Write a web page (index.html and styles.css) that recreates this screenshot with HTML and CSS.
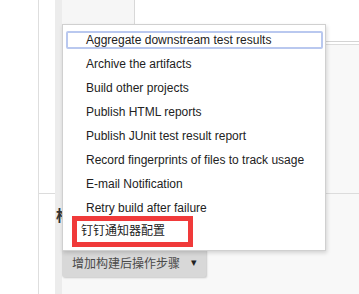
FILE: index.html
```html
<!DOCTYPE html>
<html>

<head>
    <link rel="stylesheet" href="styles.css">
</head>

<body>
    <div class="page">
        <div class="side"></div>
        <div class="gutter">
            <div class="gutter-top"></div>
        </div>
        <div class="main">
            <div class="top">
                <div class="tab"></div>
            </div>
            <div class="panel">
                <div class="panel-body"></div>
                <div class="section">
                    <div class="section-title">构建后操作</div>
                    <div class="add-btn">
                        <span>增加构建后操作步骤</span>
                        <span class="caret">&#9662;</span>
                    </div>
                </div>
            </div>
        </div>
    </div>

    <div class="menu">
        <div class="item focused">Aggregate downstream test results</div>
        <div class="item">Archive the artifacts</div>
        <div class="item">Build other projects</div>
        <div class="item">Publish HTML reports</div>
        <div class="item">Publish JUnit test result report</div>
        <div class="item">Record fingerprints of files to track usage</div>
        <div class="item">E-mail Notification</div>
        <div class="item">Retry build after failure</div>
        <div class="item marked">钉钉通知器配置</div>
    </div>
</body>

</html>
```

FILE: styles.css
```css
body {
    margin: 0;
    background-color: #fff;
    font-family: Arial, "Liberation Sans", "Noto Sans CJK SC", sans-serif;
    color: #222;
    width: 359px;
    height: 294px;
    overflow: hidden;
}

.page {
    display: flex;
    height: 294px;
}

.side {
    width: 38px;
    border-right: 1px solid #dedede;
    flex-shrink: 0;
}

.gutter {
    width: 16px;
    flex-shrink: 0;
    border-right: 7px solid #ececec;
}

.gutter-top {
    height: 193px;
    border-bottom: 1px solid #dcdcdc;
}

.main {
    flex: 1;
    display: flex;
    flex-direction: column;
    min-height: 0;
}

.top {
    height: 41px;
    flex-shrink: 0;
    background-color: #fff;
}

.tab {
    width: 72px;
    height: 24px;
    border-right: 1px solid #d8d8d8;
    background-color: #f6f6f6;
}

.panel {
    flex: 1;
    min-height: 0;
    border-top: 1px solid #d4d4d4;
    background-color: #fff;
}

.panel-body {
    height: 148px;
    margin-top: 2px;
    border-top: 1px solid #dcdcdc;
    border-bottom: 1px solid #dcdcdc;
    background-color: #f8f8f8;
}

.section {
    box-sizing: border-box;
    padding-top: 10px;
    background-color: #f8f8f8;
    height: 100px;
}

.section-title {
    font-weight: bold;
    font-size: 15px;
    margin-left: -6px;
    color: #333;
    height: 44px;
}

.add-btn {
    display: flex;
    align-items: center;
    justify-content: space-between;
    box-sizing: border-box;
    width: 144px;
    height: 29px;
    padding: 0 9px 0 10px;
    background-color: #d8d8d8;
    color: #4a4a4a;
    font-size: 12px;
    box-shadow: 1px 1px 2px rgba(0, 0, 0, 0.2);
    border-radius: 2px;
}

.caret {
    font-size: 11px;
    color: #222;
}

/* dropdown overlay */
.menu {
    position: absolute;
    left: 62px;
    top: 24px;
    width: 262px;
    height: 222px;
    padding-top: 3px;
    box-sizing: content-box;
    background-color: #fff;
    border: 1px solid #d0d0d0;
    box-shadow: 1px 2px 4px rgba(0, 0, 0, 0.15);
}

.item {
    height: 24px;
    line-height: 24px;
    font-size: 12px;
    padding-left: 23px;
    box-sizing: border-box;
    white-space: nowrap;
    color: #222;
}

.item.focused {
    height: 18px;
    margin: 3px 2px 3px 3px;
    border: 2px solid #b9c8ef;
    border-radius: 2px;
    padding-left: 18px;
    line-height: 14px;
}

.item.marked {
    width: 121px;
    height: 31px;
    margin: -4px 0 0 9px;
    border: 5px solid #f03a3a;
    padding-left: 4px;
    line-height: 21px;
}
```
